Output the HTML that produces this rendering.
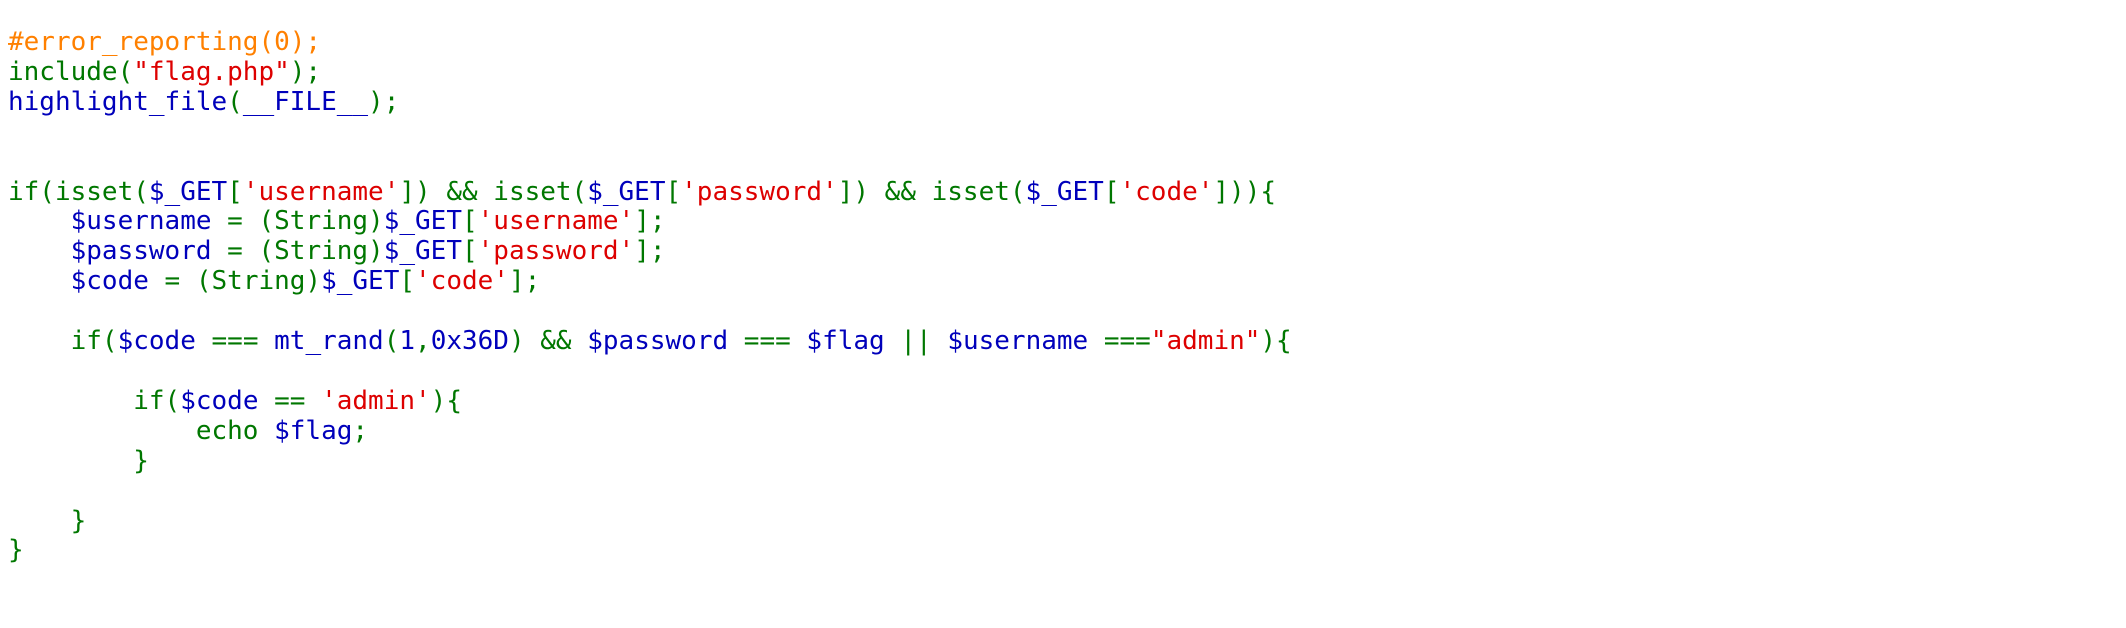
<!DOCTYPE html>
<html><head><meta charset="utf-8"><style>
html,body{margin:0;padding:0;background:#fff;width:2126px;height:628px;overflow:hidden}
pre{margin:0;position:absolute;left:8px;top:28px;font-family:"DejaVu Sans Mono","Liberation Mono",monospace;font-size:26px;line-height:29.9px;color:#007700}
.o{color:#FF8000}.g{color:#007700}.b{color:#0000BB}.r{color:#DD0000}
</style></head><body><pre><span class="o">#error_reporting(0);</span>
<span class="g">include(</span><span class="r">"flag.php"</span><span class="g">);</span>
<span class="b">highlight_file</span><span class="g">(</span><span class="b">__FILE__</span><span class="g">);</span>


<span class="g">if(isset(</span><span class="b">$_GET</span><span class="g">[</span><span class="r">'username'</span><span class="g">]) &amp;&amp; isset(</span><span class="b">$_GET</span><span class="g">[</span><span class="r">'password'</span><span class="g">]) &amp;&amp; isset(</span><span class="b">$_GET</span><span class="g">[</span><span class="r">'code'</span><span class="g">])){</span>
    <span class="b">$username </span><span class="g">= (String)</span><span class="b">$_GET</span><span class="g">[</span><span class="r">'username'</span><span class="g">];</span>
    <span class="b">$password </span><span class="g">= (String)</span><span class="b">$_GET</span><span class="g">[</span><span class="r">'password'</span><span class="g">];</span>
    <span class="b">$code </span><span class="g">= (String)</span><span class="b">$_GET</span><span class="g">[</span><span class="r">'code'</span><span class="g">];</span>

    <span class="g">if(</span><span class="b">$code </span><span class="g">=== </span><span class="b">mt_rand</span><span class="g">(</span><span class="b">1</span><span class="g">,</span><span class="b">0x36D</span><span class="g">) &amp;&amp; </span><span class="b">$password </span><span class="g">=== </span><span class="b">$flag </span><span class="g">|| </span><span class="b">$username </span><span class="g">===</span><span class="r">"admin"</span><span class="g">){</span>

        <span class="g">if(</span><span class="b">$code </span><span class="g">== </span><span class="r">'admin'</span><span class="g">){</span>
            <span class="g">echo </span><span class="b">$flag</span><span class="g">;</span>
        <span class="g">}</span>

    <span class="g">}</span>
<span class="g">}</span></pre></body></html>
